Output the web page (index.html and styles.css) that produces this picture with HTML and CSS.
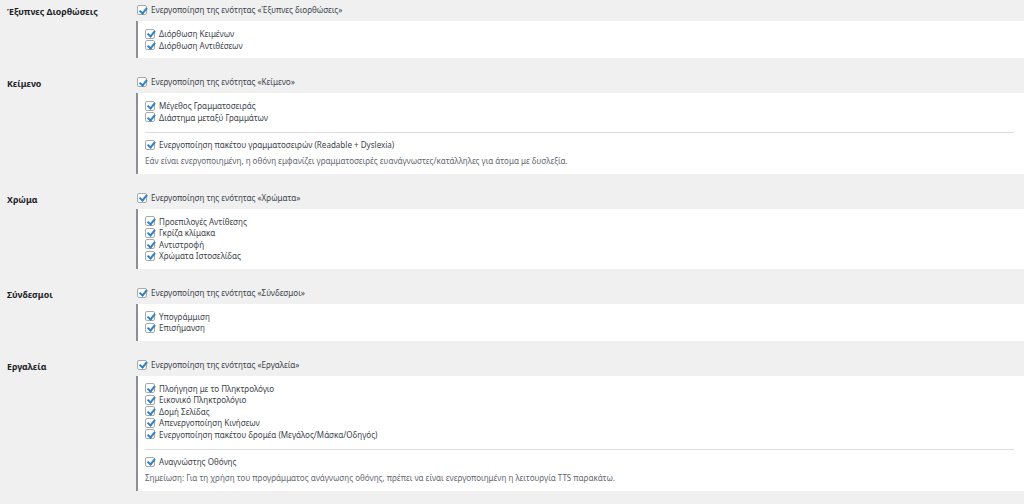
FILE: index.html
```html
<!DOCTYPE html>
<html lang="el">
<head>
    <meta charset="UTF-8">
    <title>Ρυθμίσεις Προσβασιμότητας</title>
    <link rel="stylesheet" href="styles.css">
</head>
<body>
    <div class="settings">

        <div class="row">
            <div class="th">Έξυπνες Διορθώσεις</div>
            <div class="td">
                <label class="opt"><input type="checkbox" checked> Ενεργοποίηση της ενότητας «Έξυπνες διορθώσεις»</label>
                <div class="group">
                    <label class="opt"><input type="checkbox" checked> Διόρθωση Κειμένων</label>
                    <label class="opt"><input type="checkbox" checked> Διόρθωση Αντιθέσεων</label>
                </div>
            </div>
        </div>

        <div class="row">
            <div class="th">Κείμενο</div>
            <div class="td">
                <label class="opt"><input type="checkbox" checked> Ενεργοποίηση της ενότητας «Κείμενο»</label>
                <div class="group">
                    <label class="opt"><input type="checkbox" checked> Μέγεθος Γραμματοσειράς</label>
                    <label class="opt"><input type="checkbox" checked> Διάστημα μεταξύ Γραμμάτων</label>
                    <hr class="sep">
                    <label class="opt"><input type="checkbox" checked> Ενεργοποίηση πακέτου γραμματοσειρών (Readable + Dyslexia)</label>
                    <p class="description">Εάν είναι ενεργοποιημένη, η οθόνη εμφανίζει γραμματοσειρές ευανάγνωστες/κατάλληλες για άτομα με δυσλεξία.</p>
                </div>
            </div>
        </div>

        <div class="row">
            <div class="th">Χρώμα</div>
            <div class="td">
                <label class="opt"><input type="checkbox" checked> Ενεργοποίηση της ενότητας «Χρώματα»</label>
                <div class="group">
                    <label class="opt"><input type="checkbox" checked> Προεπιλογές Αντίθεσης</label>
                    <label class="opt"><input type="checkbox" checked> Γκρίζα κλίμακα</label>
                    <label class="opt"><input type="checkbox" checked> Αντιστροφή</label>
                    <label class="opt"><input type="checkbox" checked> Χρώματα Ιστοσελίδας</label>
                </div>
            </div>
        </div>

        <div class="row">
            <div class="th">Σύνδεσμοι</div>
            <div class="td">
                <label class="opt"><input type="checkbox" checked> Ενεργοποίηση της ενότητας «Σύνδεσμοι»</label>
                <div class="group">
                    <label class="opt"><input type="checkbox" checked> Υπογράμμιση</label>
                    <label class="opt"><input type="checkbox" checked> Επισήμανση</label>
                </div>
            </div>
        </div>

        <div class="row">
            <div class="th">Εργαλεία</div>
            <div class="td">
                <label class="opt"><input type="checkbox" checked> Ενεργοποίηση της ενότητας «Εργαλεία»</label>
                <div class="group">
                    <label class="opt"><input type="checkbox" checked> Πλοήγηση με το Πληκτρολόγιο</label>
                    <label class="opt"><input type="checkbox" checked> Εικονικό Πληκτρολόγιο</label>
                    <label class="opt"><input type="checkbox" checked> Δομή Σελίδας</label>
                    <label class="opt"><input type="checkbox" checked> Απενεργοποίηση Κινήσεων</label>
                    <label class="opt"><input type="checkbox" checked> Ενεργοποίηση πακέτου δρομέα (Μεγάλος/Μάσκα/Οδηγός)</label>
                    <hr class="sep">
                    <label class="opt"><input type="checkbox" checked> Αναγνώστης Οθόνης</label>
                    <p class="description">Σημείωση: Για τη χρήση του προγράμματος ανάγνωσης οθόνης, πρέπει να είναι ενεργοποιημένη η λειτουργία TTS παρακάτω.</p>
                </div>
            </div>
        </div>

    </div>
</body>
</html>
```

FILE: styles.css
```css
html, body{
    margin: 0;
    padding: 0;
}
body{
    background-color: #f0f0f1;
    font-family: "Noto Sans", "Open Sans", sans-serif;
    font-size: 8.05px;
    color: #3c434a;
}
.settings{
    padding-left: 7px;
}
.row{
    display: grid;
    grid-template-columns: 129px 1fr;
    padding: 4px 0 14px;
}
.th{
    font-weight: 700;
    font-size: 8.8px;
    color: #1d2327;
    line-height: 12px;
    padding-top: 2px;
}
.opt{
    display: flex;
    align-items: center;
    height: 11.5px;
    line-height: 11.5px;
    white-space: nowrap;
}
.td > .opt{
    height: 12px;
    padding-left: 1px;
}
.opt input{
    appearance: none;
    -webkit-appearance: none;
    position: relative;
    width: 10px;
    height: 10px;
    margin: 0 4px 0 0;
    border: 1px solid #a7aaad;
    border-radius: 2px;
    background: #fff;
    box-sizing: border-box;
    flex: none;
}
.opt input:checked::before{
    content: "";
    position: absolute;
    left: 2.7px;
    top: -0.3px;
    width: 2.6px;
    height: 5.6px;
    border-right: 2px solid #3582c4;
    border-bottom: 2px solid #3582c4;
    transform: rotate(40deg);
}
.group{
    margin-top: 5px;
    background-color: #fff;
    border-left: 2px solid #8c8f94;
    padding: 7px 0 7px 7px;
}
.sep{
    border: 0;
    border-top: 1px solid #dcdcde;
    margin: 9px 10px 6px 0;
}
.description{
    margin: 4.5px 0 0;
    line-height: 11.5px;
    color: #646970;
    white-space: nowrap;
}
```
